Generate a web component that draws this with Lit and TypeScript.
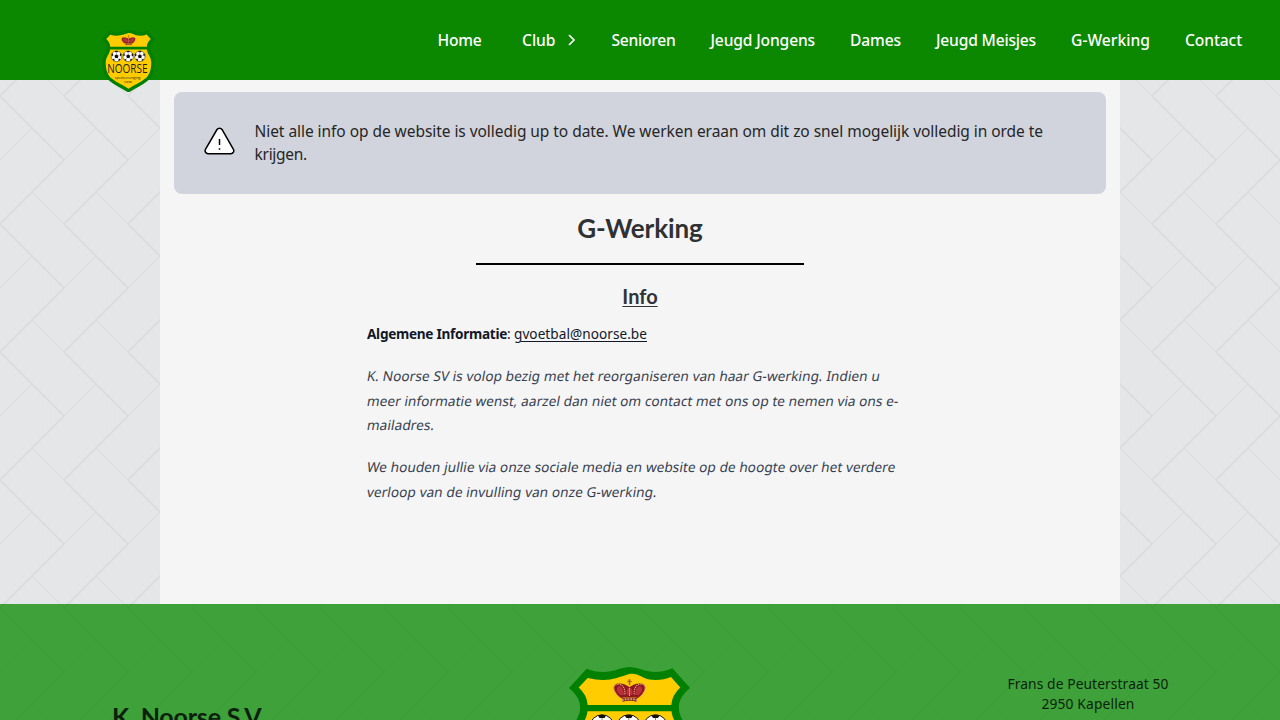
import { LitElement, html, css, svg } from "lit";
import { customElement, property } from "lit/decorators.js";

/** One line of text whose tracking is adjusted to fill a given measure. */
@customElement("fit-text")
class FitText extends LitElement {
  @property({ type: Number }) measure = 0;
  static styles = css`
    :host { display: inline-block; white-space: nowrap; }
  `;
  render() { return html`<slot></slot>`; }
  firstUpdated() {
    const n = (this.textContent ?? "").trim().length;
    const w = parseFloat(getComputedStyle(this).width);
    if (n && w) this.style.letterSpacing = `${(this.measure - w) / n}px`;
  }
}

const ball = (x: number) => svg`
  <g transform="translate(${x} 60)">
    <circle r="12.2" fill="#fff" stroke="#111" stroke-width="1"/>
    <path fill="#111" d="M0-4.5 4.5-1 3 4h-6l-1.500-5zM-4-11.400Q0-13 4-11.400L2.500-9h-5zM-11.500-4 -9-7.500-7.500-3-10.500 1zM11.500-4 9-7.500 7.500-3 10.500 1zM-8.500 8.500-8 5-4 8-4.500 11zM8.500 8.500 8 5 4 8 4.500 11z"/>
    <path stroke="#333" stroke-width=".6" fill="none" d="M0-4.500V-9M4.500-1 7.500-3M3 4 5 7M-3 4-5 7M-4.500-1-7.500-3"/>
  </g>`;

@customElement("club-badge")
class ClubBadge extends LitElement {
  static styles = css`
    :host { display: block; }
    svg { display: block; width: 100%; }
    .name { font: 27px "Open Sans", "Noto Sans", sans-serif; }
    .sub { font: 8.500px "Open Sans", "Noto Sans", sans-serif; }
  `;
  render() {
    return html`<svg viewBox="0 0 121 143">
      <path fill="#008000" d="M17.700 1.700Q27 5.500 38 4.800C47 4 53 0 60.500 0S74 4 83 4.800Q94 5.500 103.500 1.300L121 21C113 28 109 34 110 43 111 53 120 58 120 73 120 97 113 109 103 117 91 126 78 132 60.500 143 43 132 30 126 18 117 8 109 1 97 1 73 1 58 10 53 11 43 12 34 8 28 0 21z"/>
      <path fill="#fc0" d="M18.700 11Q29 13.500 38 12.800C47 12 53 9 60.500 7S74 12 83 12.800Q94 13.500 102 10L111.300 20.500Q103 28 102.300 38H18.700Q18 28 9.700 20.500z"/>
      <path fill="#fc0" d="M18.500 44.300H102.500C104 56 112.500 61 112.500 74 112.500 94 107 104 98 111.500 88 120 76 124.500 60.500 134 45 124.500 33 120 23 111.500 14 104 8.500 94 8.500 74 8.500 61 17 56 18.500 44.300z"/>
      <g>
        <path fill="#8f1722" d="M52 31C44 26 42 17 49 16.500 54 16 57 18 60.500 20 64 18 67 16 72 16.500 79 17 77 26 69 31Q60 29 52 31z"/>
        <path fill="#b83038" d="M51 28Q45 22 50 19 54 19 55 28zM70 28Q76 22 71 19 67 19 66 28zM58 28Q56 22 60.500 21 65 22 63 28z"/>
        <path fill="none" stroke="#e0b080" stroke-width="1.100" stroke-dasharray="1.400 .8" d="M51 31C43 24 43 17 50 17Q56 18 56 28M70 31C78 24 78 17 71 17Q65 18 65 28M60.500 29V18"/>
        <path fill="none" stroke="#8a3028" stroke-width="3.400" d="M53 33Q60.500 31 68 33"/>
        <path fill="none" stroke="#e0b080" stroke-width="1.600" stroke-dasharray="1.600 1.200" d="M53 33Q60.500 31 68 33"/>
        <path stroke="#a85a20" stroke-width="1.300" d="M60.500 12v6M58.500 14.500h4"/>
      </g>
      ${ball(33)}${ball(59.800)}${ball(86.500)}
      <text class="name" x="12" y="97.500" textLength="92" lengthAdjust="spacingAndGlyphs" fill="#222">NOORSE</text>
      <text class="sub" x="29" y="112.500" textLength="59" lengthAdjust="spacingAndGlyphs" fill="#222">sportvereniging</text>
      <text class="sub" x="51" y="121" textLength="17" lengthAdjust="spacingAndGlyphs" fill="#222">vzw</text>
    </svg>`;
  }
}

const links = [
  { label: "Senioren", w: 64 },
  { label: "Jeugd Jongens", w: 104.500 },
  { label: "Dames", w: 51 },
  { label: "Jeugd Meisjes", w: 100 },
  { label: "G-Werking", w: 79 },
  { label: "Contact", w: 57 },
];
const notice = [
  { text: "Niet alle info op de website is volledig up to date. We werken eraan om dit zo snel mogelijk volledig in orde te", w: 788.500 },
  { text: "krijgen.", w: 52.500 },
];
const paragraphs = [
  [
    { text: "K. Noorse SV is volop bezig met het reorganiseren van haar G-werking. Indien u", w: 513 },
    { text: "meer informatie wenst, aarzel dan niet om contact met ons op te nemen via ons e-", w: 531.500 },
    { text: "mailadres.", w: 67.500 },
  ],
  [
    { text: "We houden jullie via onze sociale media en website op de hoogte over het verdere", w: 528.500 },
    { text: "verloop van de invulling van onze G-werking.", w: 290 },
  ],
];

@customElement("app-root")
class AppRoot extends LitElement {
  static styles = css`
    :host {
      display: flex; flex-direction: column; height: 720px; overflow: hidden; position: relative;
      background: #e4e6e8; font-family: "Noto Sans", "Open Sans", sans-serif; color: #222;
    }
    * { box-sizing: border-box; }
    .pattern { position: absolute; inset: 0; width: 100%; height: 100%; }
    header {
      position: relative; z-index: 2; flex: none; height: 80px; background: #0b8800;
      display: flex; justify-content: space-between; padding: 0 38px 0 102px;
    }
    .logo { width: 53px; margin-top: 29.500px; }
    nav { display: flex; align-items: center; gap: 35px; height: 80px; color: #fff; font-size: 15.600px; font-weight: 500; line-height: 24px; }
    .club { display: flex; align-items: center; gap: 11px; margin-left: 5.500px; }
    .club svg { width: 10px; height: 14px; }
    main { position: relative; flex: none; width: 960px; height: 524px; margin: 0 auto; padding: 12px 14px; background: #f5f5f5; }
    .notice { height: 102px; border-radius: 8px; background: #d1d4dc; display: flex; align-items: center; padding: 0 30px; font-size: 15.500px; line-height: 23px; color: #262626; }
    .notice svg { width: 31px; height: 30px; margin: -4px 19.500px 0 0; flex: none; }
    h1, h2, .brand { font-family: Lato, "Noto Sans", sans-serif; }
    h1 { margin: 16px 0 0; font-size: 26px; line-height: 36px; text-align: center; color: #2f3133; }
    .rule { width: 328px; height: 2px; margin: 17px auto 0; background: #000; }
    h2 { margin: 17px 0 0; font-size: 20px; line-height: 28px; text-align: center; color: #333; text-decoration: underline; text-underline-offset: 2px; text-decoration-thickness: 1px; }
    .prose { width: 546px; margin: 12px auto 0; font-size: 13.600px; line-height: 24.500px; color: #374151; }
    p { margin: 0 0 17.500px; }
    .info { color: #111827; white-space: nowrap; }
    .info .mail { text-decoration: underline; text-underline-offset: 2px; text-decoration-thickness: 1px; }
    .it fit-text { transform: skewX(-10deg); }
    footer {
      position: relative; flex: none; height: 116px; overflow: hidden; background: rgba(8, 137, 0, .75);
      display: grid; grid-template-columns: 457px 1fr 480px; color: #0c1f0b;
    }
    .brand { padding: 97px 0 0 112px; font-size: 25px; line-height: 30px; font-weight: 700; }
    .crest { width: 121px; margin-top: 63px; margin-left: 112px; }
    address { width: 384px; margin-left: 40px; padding: 70px 0 0 112px; text-align: center; font-style: normal; font-size: 13.800px; line-height: 20px; }
  `;
  render() {
    return html`
      <svg class="pattern">
        <defs>
          <pattern id="bricks" width="64" height="128" patternUnits="userSpaceOnUse" y="96">
            <path fill="none" stroke="#dadbdd" stroke-width="1.800" d="M-1-1 64 64M0 128 64 64"/>
            <path fill="none" stroke="#dcdddf" stroke-width="1.200" d="M0 64 32 32M32 96 65 129"/>
          </pattern>
        </defs>
        <rect width="100%" height="100%" fill="url(#bricks)"></rect>
      </svg>
      <header>
        <club-badge class="logo"></club-badge>
        <nav>
          <fit-text measure="44">Home</fit-text>
          <div class="club">
            <fit-text measure="33.500">Club</fit-text>
            <svg viewBox="0 0 10 14" fill="none" stroke="#fff" stroke-width="1.700"><path d="M2 2 7 7 2 12"/></svg>
          </div>
          ${links.map((l) => html`<fit-text measure=${l.w}>${l.label}</fit-text>`)}
        </nav>
      </header>
      <main>
        <div class="notice">
          <svg viewBox="0 0 31 30" fill="#fff" stroke="#000" stroke-width="1.500" stroke-linecap="round">
            <path d="M13 3.500a3 3 0 0 1 5 0l11.300 19.700a3 3 0 0 1-2.400 4.600H4a3 3 0 0 1-2.400-4.600z"/>
            <path stroke-linecap="butt" d="M15.500 13v6M15.500 22.200v1.600"/>
          </svg>
          <div>${notice.map((l) => html`<div><fit-text measure=${l.w}>${l.text}</fit-text></div>`)}</div>
        </div>
        <h1><fit-text measure="125.500">G-Werking</fit-text></h1>
        <div class="rule"></div>
        <h2>Info</h2>
        <div class="prose">
          <p class="info"><b><fit-text measure="140">Algemene Informatie</fit-text></b><fit-text measure="7">:</fit-text><a><fit-text class="mail" measure="133">gvoetbal@noorse.be</fit-text></a></p>
          ${paragraphs.map((p) => html`<p class="it">${p.map((l) => html`<fit-text measure=${l.w}>${l.text}</fit-text><br />`)}</p>`)}
        </div>
      </main>
      <footer>
        <div class="brand"><fit-text measure="153.500">K. Noorse S.V.</fit-text></div>
        <club-badge class="crest"></club-badge>
        <address>
          <fit-text measure="161">Frans de Peuterstraat 50</fit-text><br />
          <fit-text measure="93">2950 Kapellen</fit-text>
        </address>
      </footer>
    `;
  }
}
